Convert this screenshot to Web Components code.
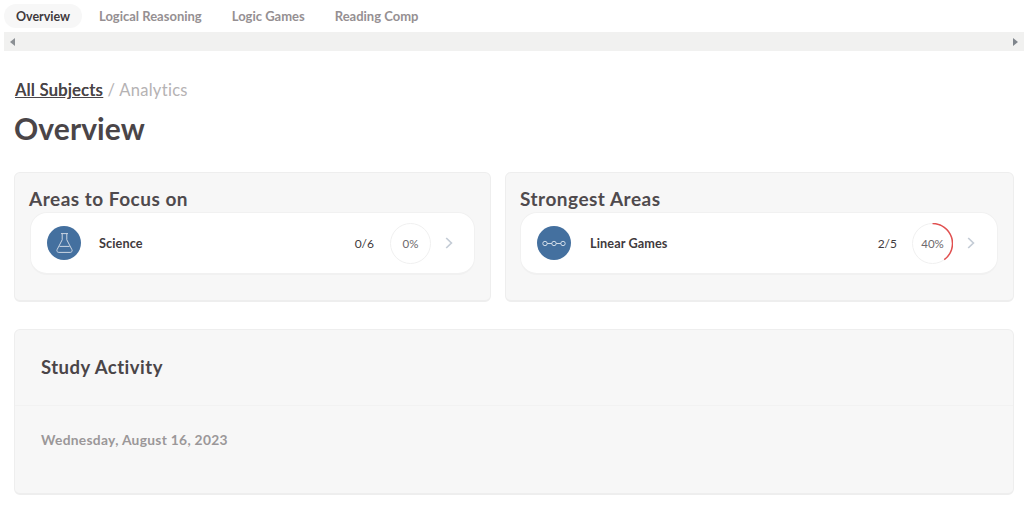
<!DOCTYPE html>
<html><head><meta charset="utf-8"><style>
html,body{margin:0;padding:0;background:#fff}
body{font-family:Lato,"Noto Sans",sans-serif;color:#4a4548;width:1024px;height:506px;overflow:hidden}
</style></head><body>
<app-page></app-page>
<template id="t-page"><style>
:host{display:block}
.main{padding:0 10px 0 14px}
h1{margin:9px 0 0 0;font-size:30px;line-height:36px;font-weight:700;color:#4a4548;height:36px;letter-spacing:.1px}
.row{display:grid;grid-template-columns:477px 509px;gap:14px;margin-top:26px}
</style>
<tab-bar></tab-bar>
<div class="main">
<bread-crumb></bread-crumb>
<h1>Overview</h1>
<div class="row">
<area-card heading="Areas to Focus on"><area-row name="Science" score="0/6" pct="0" icon="flask"></area-row></area-card>
<area-card heading="Strongest Areas"><area-row shift name="Linear Games" score="2/5" pct="40" icon="chain"></area-row></area-card>
</div>
<study-panel></study-panel>
</div></template>

<template id="t-tabs"><style>
:host{display:block;height:51px;padding-left:4px}
.tabs{display:flex;height:32px;padding-top:4px;box-sizing:border-box;font-size:13px;font-weight:700;color:#958f92}
.tab{height:24px;line-height:25px;white-space:nowrap}
.on{width:78px;text-align:center;background:#f7f7f7;border-radius:12px;color:#3f3a3d;font-size:12.5px}
.t1{margin-left:17px}.t2{margin-left:30px}.t3{margin-left:30px}
.bar{height:19px;background:#f1f1f0;display:flex;justify-content:space-between;align-items:center;padding:0 6px}
svg{display:block}
</style>
<div class="tabs"><div class="tab on">Overview</div><div class="tab t1">Logical Reasoning</div><div class="tab t2">Logic Games</div><div class="tab t3">Reading Comp</div></div>
<div class="bar"><svg width="5" height="8" viewBox="0 0 5 8"><path d="M5 0v8L0 4z" fill="#8b8f94"/></svg><svg width="5" height="8" viewBox="0 0 5 8"><path d="M0 0v8l5-4z" fill="#7f858c"/></svg></div></template>

<template id="t-crumb"><style>
:host{display:block;margin:28px 0 0 1px;font-size:16.5px;line-height:22px;color:#b5b2b3;letter-spacing:.3px}
a{color:#4a4548;text-decoration:underline;font-weight:500;text-shadow:.3px 0 0 #4a4548}
</style><a>All Subjects</a> / Analytics</template>

<template id="t-card"><style>
:host{display:block;box-sizing:border-box;height:130px;background:#f7f7f7;border:1px solid #eeeeee;border-bottom-width:2px;border-radius:6px;padding:14px 15px 0 15px}
h2{margin:0 0 1px -1px;font-size:19px;line-height:24px;font-weight:700;color:#4f4a4d;letter-spacing:.5px}
</style><h2></h2><slot></slot></template>

<template id="t-row"><style>
:host{display:flex;align-items:center;box-sizing:border-box;height:63px;background:#fff;border:1px solid #f1f1f1;border-bottom-width:2px;border-radius:17px;padding:0 21px 0 16px}
:host([shift]){margin-left:-1px;padding-right:22px}
.ic{width:34px;height:34px;border-radius:50%;background:#44709f;flex:none;display:flex;align-items:center;justify-content:center}
.name{margin-left:18px;font-size:12.7px;font-weight:700;color:#3f3a3d;flex:1;letter-spacing:.1px}
:host([shift]) .name{margin-left:19px}
.score{font-size:12px;color:#3f3a3d;margin-right:16px}
:host([shift]) .score{margin-right:15px}
.ring{position:relative;width:41px;height:41px;flex:none;margin-right:14px}
.ring svg{display:block}
.pct{position:absolute;inset:0;display:flex;align-items:center;justify-content:center;font-size:11.5px;color:#6d696c;}
</style>
<div class="ic"></div><div class="name"></div><div class="score"></div>
<div class="ring"><svg width="41" height="41" viewBox="0 0 41 41"><circle cx="20.5" cy="20.5" r="20" fill="none" stroke="#f0f0f0" stroke-width="1"/><path class="arc" fill="none" stroke="#e15050" stroke-width="1.5"/></svg><div class="pct"></div></div>
<svg width="8" height="12" viewBox="0 0 8 12"><path d="M1.2 1l5.2 5-5.2 5" fill="none" stroke="#c4ccd6" stroke-width="1.7"/></svg></template>

<template id="t-study"><style>
:host{display:block;box-sizing:border-box;height:166px;margin-top:27px;background:#f7f7f7;border:1px solid #eeeeee;border-bottom-width:2px;border-radius:6px}
.h{height:76px;border-bottom:1px solid #f2f2f2;padding:24px 0 0 26px;box-sizing:border-box;font-size:18.5px;line-height:26px;font-weight:700;color:#4a4548;letter-spacing:.5px}
.d{padding:24px 0 0 26px;font-size:13.8px;line-height:19px;font-weight:700;color:#9b9799;letter-spacing:.3px}
</style><div class="h">Study Activity</div><div class="d">Wednesday, August 16, 2023</div></template>

<script>
function mk(name,tid,setup){customElements.define(name,class extends HTMLElement{
 constructor(){super();this.attachShadow({mode:'open'}).appendChild(document.getElementById(tid).content.cloneNode(true));}
 connectedCallback(){if(setup)setup(this,this.shadowRoot);}
});}
const icons={
flask:'<svg width="17" height="20" viewBox="0 0 17 20" fill="none" stroke="#ccd6e3" stroke-width="1" stroke-linejoin="round"><path d="M5 .6h7M6.2 .6v6.2L1.1 16.6c-.7 1.5.2 2.8 1.7 2.8h11.4c1.5 0 2.4-1.3 1.7-2.8L10.8 6.8V.6M3.4 13.4h10.2"/></svg>',
chain:'<svg width="24" height="7" viewBox="0 0 24 7" fill="none" stroke="#dfe6ef" stroke-width=".9"><circle cx="3" cy="3.5" r="2.2"/><circle cx="12" cy="3.5" r="2.2"/><circle cx="21" cy="3.5" r="2.2"/><path d="M5.2 3.5h4.6M14.2 3.5h4.6"/></svg>'};
mk('tab-bar','t-tabs');
mk('bread-crumb','t-crumb');
mk('area-card','t-card',(e,s)=>{s.querySelector('h2').textContent=e.getAttribute('heading');});
mk('area-row','t-row',(e,s)=>{
 s.querySelector('.ic').innerHTML=icons[e.getAttribute('icon')];
 s.querySelector('.name').textContent=e.getAttribute('name');
 s.querySelector('.score').textContent=e.getAttribute('score');
 const p=+e.getAttribute('pct');s.querySelector('.pct').textContent=p+'%';
 if(p){const a=p/100*2*Math.PI,x=20.5+20*Math.sin(a),y=20.5-20*Math.cos(a);
  s.querySelector('.arc').setAttribute('d',`M20.5 .5A20 20 0 0 1 ${x.toFixed(2)} ${y.toFixed(2)}`);}
});
mk('study-panel','t-study');
mk('app-page','t-page');
</script>
</body></html>
